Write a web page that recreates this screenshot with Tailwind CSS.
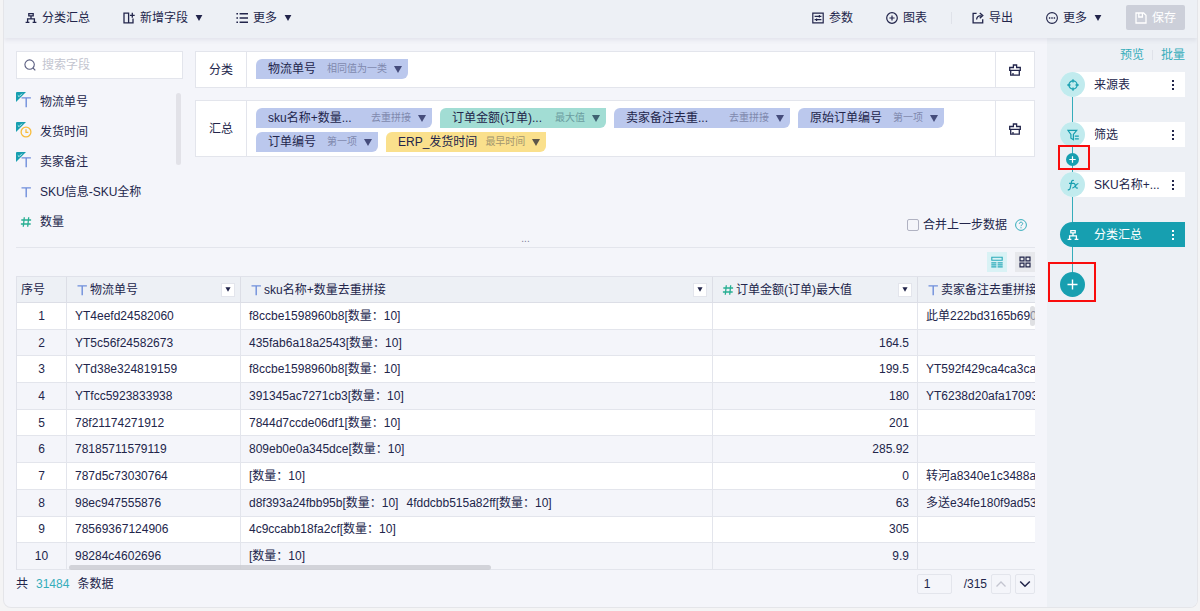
<!DOCTYPE html>
<html lang="zh-CN">
<head>
<meta charset="utf-8">
<meta name="viewport" content="width=device-width, initial-scale=1">
<title>分类汇总</title>
<script src="https://cdn.jsdelivr.net/npm/@tailwindcss/browser@4"></script>
</head>
<body class="min-h-screen bg-[#f4f4f5] pl-[3px] pr-[2px] pb-[3px] font-['Liberation_Sans','Noto_Sans_CJK_SC',sans-serif] text-xs text-[#22254b]">

<svg class="hidden" aria-hidden="true">
  <symbol id="tri" viewBox="0 0 8 6"><path d="M0.6 0h6.8L4 6z" fill="currentColor"/></symbol>
  <symbol id="tree" viewBox="0 0 12 12"><path d="M3.8 1.6h4.4v2.2H3.8zM6 3.8v3M2.6 10V6.8h6.8V10M0.6 10.4h3.8M7.6 10.4h3.8" fill="none" stroke="currentColor" stroke-width="1.3"/></symbol>
  <symbol id="type-t" viewBox="0 0 12 12"><path d="M1.5 1.9h9.4M6.2 1.9v9.3" fill="none" stroke="currentColor" stroke-width="1.4"/></symbol>
  <symbol id="type-n" viewBox="0 0 12 12"><path d="M4.3 1.3L3.3 10.8M8.7 1.3l-1 9.5M1.3 4h9.8M0.9 8h9.8" fill="none" stroke="currentColor" stroke-width="1.3"/></symbol>
  <symbol id="corner" viewBox="0 0 10 10"><path d="M0 1Q0 0 1 0h9L0 10z" fill="#179fb0"/><path d="M1.8 3.4l1.3 1.2L6 1.7" fill="none" stroke="#e6f7f8" stroke-width="0.9"/></symbol>
  <symbol id="brush" viewBox="0 0 12 12"><path d="M4.4 3.5V1h3.2v2.5h3.7v2.9H0.7V3.5zM1.7 6.4v4.7h8.6V6.4M4 11V9" fill="none" stroke="currentColor" stroke-width="1.3"/></symbol>
  <symbol id="dots" viewBox="0 0 4 12"><path d="M1 1h2v2H1zM1 5h2v2H1zM1 9h2v2H1z" fill="currentColor"/></symbol>
</svg>

<div class="flex min-h-[608px] flex-col overflow-hidden rounded-b-lg border-x border-b border-[#e4e5e9] bg-[#f4f5fa]">

  <header class="relative z-10 flex h-[38px] items-center justify-between bg-[#edf0f5] pr-3 pl-[21px] pb-[3px] shadow-[0_2px_5px_rgba(40,45,80,0.09)]">
    <div class="flex items-center gap-[33px]">
      <h1 class="flex items-center gap-[5px]"><svg class="size-3"><use href="#tree"/></svg>分类汇总</h1>
      <button class="flex items-center gap-[5px]">
        <svg class="size-3" viewBox="0 0 12 12" fill="none" stroke="currentColor" stroke-width="1.3"><path d="M5.6 1.2H1v9.6h4.6M5.6 0.6v10.8M5.6 10.8H10V6.6M9.3 0.8v5M6.9 3.3h4.8"/></svg>新增字段<svg class="ml-[2px] h-1.5 w-2"><use href="#tri"/></svg>
      </button>
      <button class="flex items-center gap-[5px]">
        <svg class="size-3" viewBox="0 0 12 12" fill="none" stroke="currentColor" stroke-width="1.4"><path d="M3.6 1.7H12M3.6 6H12M3.6 10.3H12M0.4 1.7h1.6M0.4 6h1.6M0.4 10.3h1.6"/></svg>更多<svg class="ml-[2px] h-1.5 w-2"><use href="#tri"/></svg>
      </button>
    </div>
    <div class="flex items-center">
      <button class="flex items-center gap-[5px]">
        <svg class="size-3" viewBox="0 0 12 12" fill="none" stroke="currentColor" stroke-width="1.2"><path d="M0.8 1.2h10.4v9.6H0.8zM2.6 4.3h6.8M2.6 7.7h6.8M7.4 3v2.6M4.6 6.4V9"/></svg>参数
      </button>
      <button class="ml-[33px] flex items-center gap-[5px]">
        <svg class="size-3" viewBox="0 0 12 12" fill="none" stroke="currentColor" stroke-width="1.2"><circle cx="6" cy="6" r="5.3"/><path d="M6 3.4v5.2M3.4 6h5.2"/></svg>图表
      </button>
      <span class="mr-5 ml-6 h-3 w-px bg-[#dfe2e9]"></span>
      <button class="flex items-center gap-[5px]">
        <svg class="size-3" viewBox="0 0 12 12" fill="none" stroke="currentColor" stroke-width="1.3"><path d="M4.6 1.3H1.1v9.6h9.6V7.2M4.6 7.6c0-2.6 1.5-4 5-4M7.8 0.9l3 2.7-3 2.7"/></svg>导出
      </button>
      <button class="ml-[33px] flex items-center gap-[5px]">
        <svg class="size-3" viewBox="0 0 12 12" fill="none" stroke="currentColor" stroke-width="1.1"><circle cx="6" cy="6" r="5.4"/><path d="M2.9 6h1.4M5.3 6h1.4M7.7 6h1.4" stroke-width="1.4"/></svg>更多<svg class="ml-[2px] h-1.5 w-2"><use href="#tri"/></svg>
      </button>
      <button disabled class="ml-6 flex h-[25px] w-[59px] items-center justify-center gap-[5px] rounded-xs bg-[#cccfd9] text-white">
        <svg class="size-3" viewBox="0 0 12 12" fill="none" stroke="currentColor" stroke-width="1.3"><path d="M1 1h7.6L11 3.3V11H1zM3.8 1v4h3.6V1"/></svg>保存
      </button>
    </div>
  </header>

  <div class="flex flex-1">
    <main class="min-w-0 flex-1 pt-[13px] pr-3 pl-3">

      <section class="flex gap-3 border-b border-[#e3e5ec] pb-[10px]">
        <div class="w-[167px] shrink-0">
          <label class="flex h-7 items-center gap-1.5 border border-[#e3e5ec] bg-white px-[7px]">
            <svg class="size-3 shrink-0 text-[#5a5e80]" viewBox="0 0 12 12" fill="none" stroke="currentColor" stroke-width="1.1"><circle cx="5.6" cy="5.6" r="4.7"/><path d="M9 9l2.3 2.3"/></svg>
            <input type="search" aria-label="搜索字段" placeholder="搜索字段" class="w-full bg-transparent outline-none placeholder:text-[#c3c5d0]">
          </label>
          <div class="mt-2 flex justify-between">
            <ul>
              <li class="flex h-[30px] items-center gap-2"><span class="relative h-4 w-4"><svg class="absolute top-[2px] left-1 size-3 text-[#6f8edb]"><use href="#type-t"/></svg><svg class="absolute -top-[2px] left-0 size-[10px]"><use href="#corner"/></svg></span>物流单号</li>
              <li class="flex h-[30px] items-center gap-2"><span class="relative h-4 w-4"><svg class="absolute top-[2px] left-1 size-3 text-[#f7bc3c]" viewBox="0 0 12 12" fill="none" stroke="currentColor" stroke-width="1.3"><circle cx="6" cy="6" r="4.9"/><path d="M6 3.2v3.1h2.4"/></svg><svg class="absolute -top-[2px] left-0 size-[10px]"><use href="#corner"/></svg></span>发货时间</li>
              <li class="flex h-[30px] items-center gap-2"><span class="relative h-4 w-4"><svg class="absolute top-[2px] left-1 size-3 text-[#6f8edb]"><use href="#type-t"/></svg><svg class="absolute -top-[2px] left-0 size-[10px]"><use href="#corner"/></svg></span>卖家备注</li>
              <li class="flex h-[30px] items-center gap-2"><svg class="ml-1 size-3 text-[#6f8edb]"><use href="#type-t"/></svg>SKU信息-SKU全称</li>
              <li class="flex h-[30px] items-center gap-2"><svg class="ml-1 size-3 text-[#27ae92]"><use href="#type-n"/></svg>数量</li>
            </ul>
            <div class="mt-1.5 mr-[2px] h-[72px] w-[5px] rounded-full bg-[#e2e2e8]"></div>
          </div>
        </div>

        <div class="flex min-w-0 flex-1 flex-col gap-3">
          <div class="flex min-h-[37px] items-stretch border border-[#e3e5ec] bg-white">
            <div class="flex w-[51px] shrink-0 items-center justify-center border-r border-[#e3e5ec]">分类</div>
            <div class="flex flex-1 flex-wrap content-start gap-x-2 gap-y-1 px-[9px] pt-[7px] pb-1">
              <button class="flex h-5 items-center rounded-tl-md rounded-br-md bg-[#bbc8ed] pr-[6px] pl-3">物流单号<span class="mr-[7px] ml-[11px] text-[10px] text-[#8089ad]">相同值为一类</span><svg class="h-2 w-2 text-[#454c7b]" viewBox="0 0 8 8"><path d="M0 1h8L4 8z" fill="currentColor"/></svg></button>
            </div>
            <button aria-label="清空分类" class="flex w-[39px] shrink-0 items-center justify-center border-l border-[#e3e5ec]"><svg class="size-3"><use href="#brush"/></svg></button>
          </div>

          <div class="flex min-h-[57px] items-stretch border border-[#e3e5ec] bg-white">
            <div class="flex w-[51px] shrink-0 items-center justify-center border-r border-[#e3e5ec]">汇总</div>
            <div class="flex flex-1 flex-wrap content-start gap-x-2 gap-y-1 px-[9px] pt-[7px] pb-1">
              <button class="flex h-5 items-center rounded-tl-md rounded-br-md bg-[#bbc8ed] pr-[6px] pl-3"><span class="w-[92px] text-left">sku名称+数量...</span><span class="mr-[7px] ml-[11px] text-[10px] text-[#8089ad]">去重拼接</span><svg class="h-2 w-2 text-[#454c7b]" viewBox="0 0 8 8"><path d="M0 1h8L4 8z" fill="currentColor"/></svg></button>
              <button class="flex h-5 items-center rounded-tl-md rounded-br-md bg-[#a2ddd4] pr-[6px] pl-3"><span class="w-[92px] text-left">订单金额(订单)...</span><span class="mr-[7px] ml-[11px] text-[10px] text-[#6b9c9f]">最大值</span><svg class="h-2 w-2 text-[#3f6272]" viewBox="0 0 8 8"><path d="M0 1h8L4 8z" fill="currentColor"/></svg></button>
              <button class="flex h-5 items-center rounded-tl-md rounded-br-md bg-[#bbc8ed] pr-[6px] pl-3"><span class="w-[92px] text-left">卖家备注去重...</span><span class="mr-[7px] ml-[11px] text-[10px] text-[#8089ad]">去重拼接</span><svg class="h-2 w-2 text-[#454c7b]" viewBox="0 0 8 8"><path d="M0 1h8L4 8z" fill="currentColor"/></svg></button>
              <button class="flex h-5 items-center rounded-tl-md rounded-br-md bg-[#bbc8ed] pr-[6px] pl-3">原始订单编号<span class="mr-[7px] ml-[11px] text-[10px] text-[#8089ad]">第一项</span><svg class="h-2 w-2 text-[#454c7b]" viewBox="0 0 8 8"><path d="M0 1h8L4 8z" fill="currentColor"/></svg></button>
              <button class="flex h-5 items-center rounded-tl-md rounded-br-md bg-[#bbc8ed] pr-[6px] pl-3">订单编号<span class="mr-[7px] ml-[11px] text-[10px] text-[#8089ad]">第一项</span><svg class="h-2 w-2 text-[#454c7b]" viewBox="0 0 8 8"><path d="M0 1h8L4 8z" fill="currentColor"/></svg></button>
              <button class="flex h-5 items-center rounded-tl-md rounded-br-md bg-[#fae08c] pr-[6px] pl-3">ERP_发货时间<span class="mr-[7px] ml-[8px] text-[10px] text-[#a3966f]">最早时间</span><svg class="h-2 w-2 text-[#5d5649]" viewBox="0 0 8 8"><path d="M0 1h8L4 8z" fill="currentColor"/></svg></button>
            </div>
            <button aria-label="清空汇总" class="flex w-[39px] shrink-0 items-center justify-center border-l border-[#e3e5ec]"><svg class="size-3"><use href="#brush"/></svg></button>
          </div>

          <div class="mt-auto mb-1 flex items-center justify-end gap-2 pr-2">
            <label class="flex items-center gap-1"><input type="checkbox" class="size-3 appearance-none rounded-xs border border-[#b0b2c2]">合并上一步数据</label>
            <button aria-label="帮助"><svg class="size-3 text-[#35adbb]" viewBox="0 0 12 12" fill="none" stroke="currentColor" stroke-width="1"><circle cx="6" cy="6" r="5.4"/><path d="M4.3 4.8c0-2.2 3.4-2.2 3.4-0.1C7.7 5.9 6 5.8 6 7.2M6 8.2v1.1"/></svg></button>
          </div>
        </div>
      </section>

      <div class="relative flex h-7 items-center justify-end gap-2">
        <span class="absolute -top-[15px] left-1/2 -translate-x-1/2 text-[10px] leading-3 text-[#7c7f99]">...</span>
        <button aria-label="表格视图" class="flex h-5 w-5 items-center justify-center bg-[#d9f2f5] text-[#2aaab9]"><svg class="size-3" viewBox="0 0 12 12" fill="none" stroke="currentColor" stroke-width="1.1"><path d="M0.8 1.3h10.4v3H0.8zM0.3 6.9h5.1M6.6 6.9h5.1M0.3 8.9h5.1M6.6 8.9h5.1M0.3 10.9h5.1M6.6 10.9h5.1"/></svg></button>
        <button aria-label="卡片视图" class="flex h-5 w-5 items-center justify-center bg-[#e7e8ec]"><svg class="size-3" viewBox="0 0 12 12" fill="none" stroke="currentColor" stroke-width="1.2"><path d="M1 1.1h4v3.8H1zM7 1.1h4v3.8H7zM1 7.1h4v3.8H1zM7 7.1h4v3.8H7z"/></svg></button>
      </div>

      <div class="relative overflow-hidden">
        <table class="h-[294px] w-full table-fixed border-separate border-spacing-0 border-t border-l border-[#e0e2ea] whitespace-nowrap [&_td]:overflow-hidden [&_td]:border-b [&_td]:border-[#e3e5ec] [&_td]:px-2 [&_td]:py-0 [&_td:not(:last-child)]:border-r [&_th]:h-[26px] [&_th]:overflow-hidden [&_th]:border-b [&_th]:border-[#dcdee6] [&_th]:p-0 [&_th]:font-normal [&_th:not(:last-child)]:border-r [&_tbody_tr]:bg-white [&_tbody_tr:nth-child(even)]:bg-[#f4f5fa] [&_td:first-child]:text-center [&_td:nth-child(4)]:text-right">
          <colgroup><col class="w-[50px]"><col class="w-[174px]"><col><col class="w-[205px]"><col class="w-[117px]"></colgroup>
          <thead class="bg-[#edf0f5] text-left">
            <tr>
              <th><span class="pl-1">序号</span></th>
              <th><div class="flex items-center pr-[5px] pl-[9px]"><svg class="mr-[2px] size-3 text-[#6f8edb]"><use href="#type-t"/></svg>物流单号<button aria-label="筛选物流单号" class="ml-auto flex size-[14px] items-center justify-center border border-[#e3e5ec] bg-white"><svg class="h-[5px] w-[6px]"><use href="#tri"/></svg></button></div></th>
              <th><div class="flex items-center pr-[5px] pl-[9px]"><svg class="mr-[2px] size-3 text-[#6f8edb]"><use href="#type-t"/></svg>sku名称+数量去重拼接<button aria-label="筛选去重拼接" class="ml-auto flex size-[14px] items-center justify-center border border-[#e3e5ec] bg-white"><svg class="h-[5px] w-[6px]"><use href="#tri"/></svg></button></div></th>
              <th><div class="flex items-center pr-[5px] pl-[9px]"><svg class="mr-[2px] size-3 text-[#27ae92]"><use href="#type-n"/></svg>订单金额(订单)最大值<button aria-label="筛选最大值" class="ml-auto flex size-[14px] items-center justify-center border border-[#e3e5ec] bg-white"><svg class="h-[5px] w-[6px]"><use href="#tri"/></svg></button></div></th>
              <th><div class="flex items-center pl-[9px]"><svg class="mr-[2px] size-3 shrink-0 text-[#6f8edb]"><use href="#type-t"/></svg>卖家备注去重拼接</div></th>
            </tr>
          </thead>
          <tbody>
            <tr><td>1</td><td>YT4eefd24582060</td><td>f8ccbe1598960b8[数量：10]</td><td></td><td>此单222bd3165b690</td></tr>
            <tr><td>2</td><td>YT5c56f24582673</td><td>435fab6a18a2543[数量：10]</td><td>164.5</td><td></td></tr>
            <tr><td>3</td><td>YTd38e324819159</td><td>f8ccbe1598960b8[数量：10]</td><td>199.5</td><td>YT592f429ca4ca3ca4</td></tr>
            <tr><td>4</td><td>YTfcc5923833938</td><td>391345ac7271cb3[数量：10]</td><td>180</td><td>YT6238d20afa17093</td></tr>
            <tr><td>5</td><td>78f21174271912</td><td>7844d7ccde06df1[数量：10]</td><td>201</td><td></td></tr>
            <tr><td>6</td><td>78185711579119</td><td>809eb0e0a345dce[数量：10]</td><td>285.92</td><td></td></tr>
            <tr><td>7</td><td>787d5c73030764</td><td>[数量：10]</td><td>0</td><td>转河a8340e1c3488a6</td></tr>
            <tr><td>8</td><td>98ec947555876</td><td>d8f393a24fbb95b[数量：10]<span class="ml-2">4fddcbb515a82ff[数量：10]</span></td><td>63</td><td>多送e34fe180f9ad53</td></tr>
            <tr><td>9</td><td>78569367124906</td><td>4c9ccabb18fa2cf[数量：10]</td><td>305</td><td></td></tr>
            <tr><td>10</td><td>98284c4602696</td><td>[数量：10]</td><td>9.9</td><td></td></tr>
          </tbody>
        </table>
        <div class="absolute bottom-0 left-[53px] h-[5px] w-[422px] rounded-full bg-[#c9cbd1]/80"></div>
        <div class="absolute top-[30px] right-0 h-5 w-[5px] rounded-full bg-[#c9cbd1]/60"></div>
      </div>

      <footer class="flex h-[27px] items-center justify-between">
        <p class="flex gap-2">共<span class="text-[#35adbb]">31484</span>条数据</p>
        <div class="flex items-center">
          <input aria-label="页码" value="1" class="h-5 w-[35px] rounded-xs border border-[#e3e5ec] bg-transparent px-1.5 outline-none">
          <span class="mr-1 ml-3">/315</span>
          <button aria-label="上一页" class="mr-1 flex size-5 items-center justify-center rounded-xs border border-[#e3e5ec] text-[#c3c5d0]"><svg class="h-2 w-3" viewBox="0 0 12 8" fill="none" stroke="currentColor" stroke-width="1.3"><path d="M1.5 6.5L6 2l4.5 4.5"/></svg></button>
          <button aria-label="下一页" class="flex size-5 items-center justify-center rounded-xs border border-[#e3e5ec]"><svg class="h-2 w-3" viewBox="0 0 12 8" fill="none" stroke="currentColor" stroke-width="1.5"><path d="M1.2 1.5L6 6.3l4.8-4.8"/></svg></button>
        </div>
      </footer>
    </main>

    <aside class="w-[150px] shrink-0 bg-[#edf0f5] pt-2 pr-3 pl-[13px]">
      <nav class="flex h-[18px] items-center justify-end text-[#35adbb]"><a href="#">预览</a><span class="mx-2 h-[10px] w-px bg-[#dfe2e9]"></span><a href="#">批量</a></nav>
      <ol class="relative mt-2 flex flex-col gap-[25px]">
        <li class="absolute top-3 left-3 h-[200px] w-px bg-[#35adbb]" role="presentation"></li>
        <li class="relative flex h-[25px] items-center rounded-l-full rounded-r-xs bg-white pr-[10px]">
          <span class="flex size-[25px] shrink-0 items-center justify-center rounded-full bg-[#c1ebee] text-[#179fb0]"><svg class="size-3" viewBox="0 0 12 12" fill="none" stroke="currentColor" stroke-width="1.3"><circle cx="6" cy="6" r="4.1"/><path d="M6 0.3v3.2M6 8.5v3.2M0.3 6h3.2M8.5 6h3.2"/></svg></span>
          <span class="ml-[9px] flex-1">来源表</span><button aria-label="来源表菜单"><svg class="h-3 w-1"><use href="#dots"/></svg></button>
        </li>
        <li class="relative flex h-[25px] items-center rounded-l-full rounded-r-xs bg-white pr-[10px]">
          <span class="flex size-[25px] shrink-0 items-center justify-center rounded-full bg-[#c1ebee] text-[#179fb0]"><svg class="size-3" viewBox="0 0 12 12" fill="none" stroke="currentColor" stroke-width="1.2"><path d="M0.9 1.3h8.8L6.4 5.4v5.3L3.9 9.2V5.4zM7.8 7.1h4M7.8 9.9h4"/></svg></span>
          <span class="ml-[9px] flex-1">筛选</span><button aria-label="筛选菜单"><svg class="h-3 w-1"><use href="#dots"/></svg></button>
          <div class="absolute top-[23px] -left-[2px] flex h-[25px] w-8 items-center justify-center border-2 border-[#f90c0c] pt-[3px] pr-[3px]">
            <button aria-label="插入步骤" class="flex size-[13px] items-center justify-center rounded-full bg-[#179fb0] text-white"><svg class="size-[7px]" viewBox="0 0 7 7" stroke="currentColor" stroke-width="1.2"><path d="M3.5 0.3v6.4M0.3 3.5h6.4"/></svg></button>
          </div>
        </li>
        <li class="relative flex h-[25px] items-center rounded-l-full rounded-r-xs bg-white pr-[10px]">
          <span class="flex size-[25px] shrink-0 items-center justify-center rounded-full bg-[#c1ebee] text-[#179fb0]"><svg class="size-3" viewBox="0 0 12 12" fill="none" stroke="currentColor" stroke-width="1.2"><path d="M6.9 1.5C5.4 0.9 4.8 1.6 4.5 3L3.2 9.2C3 10.5 2.2 11.1 0.8 10.6M2 4.4h4.2M6 4.5c1.6-0.4 2 0.5 2.3 2.2.3 1.7.9 2.7 2.5 2.2M11.4 4.5C9.3 4.5 7.8 9 5.2 9"/></svg></span>
          <span class="ml-[9px] flex-1 whitespace-nowrap">SKU名称+...</span><button aria-label="SKU名称菜单"><svg class="h-3 w-1"><use href="#dots"/></svg></button>
        </li>
        <li class="relative flex h-[25px] items-center rounded-l-full rounded-r-xs bg-[#179fb0] pr-[10px] text-white">
          <span class="flex size-[25px] shrink-0 items-center justify-center"><svg class="size-3"><use href="#tree"/></svg></span>
          <span class="ml-[9px] flex-1">分类汇总</span><button aria-label="分类汇总菜单"><svg class="h-3 w-1"><use href="#dots"/></svg></button>
        </li>
        <li class="relative h-[25px]">
          <button aria-label="添加步骤" class="flex size-[25px] items-center justify-center rounded-full bg-[#179fb0] text-white"><svg class="size-[11px]" viewBox="0 0 11 11" stroke="currentColor" stroke-width="1.4"><path d="M5.5 0.5v10M0.5 5.5h10"/></svg></button>
          <span class="pointer-events-none absolute -top-[10px] -left-3 h-10 w-12 border-2 border-[#f90c0c]"></span>
        </li>
      </ol>
    </aside>
  </div>
</div>
</body>
</html>
